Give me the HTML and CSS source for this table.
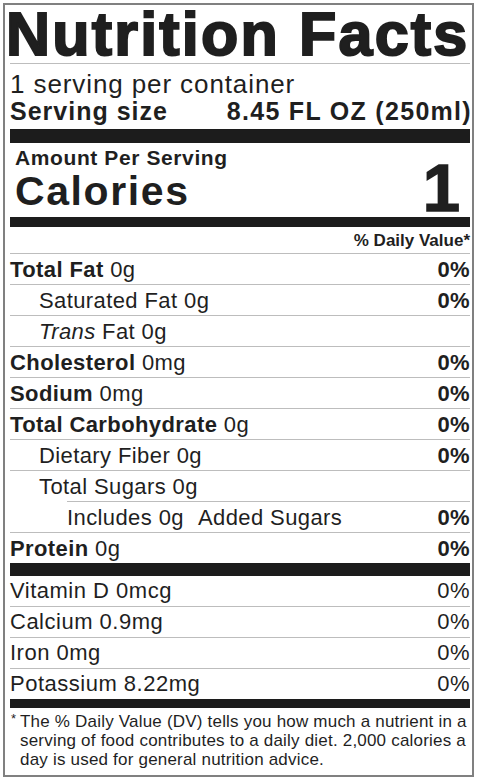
FILE: index.html
```html
<!DOCTYPE html>
<html lang="en">
<head>
  <meta charset="UTF-8">
  <meta name="viewport" content="width=device-width, initial-scale=1.0">
  <title>Nutrition Facts</title>
  <link rel="stylesheet" href="styles.css">
</head>
<body>
  <div class="label">
    <h1 class="title">Nutrition Facts</h1>

    <div class="serving">
      <p class="servings">1 serving per container</p>
      <p class="serving-size"><span>Serving size</span><span class="serving-amount">8.45 FL OZ (250ml)</span></p>
    </div>

    <div class="calories">
      <div class="calories-text">
        <p class="amount">Amount Per Serving</p>
        <p class="calories-label">Calories</p>
      </div>
      <p class="calories-value">1</p>
    </div>

    <p class="dv-head">% Daily Value*</p>

    <ul class="nutrients">
      <li class="row"><span><b>Total Fat</b> 0g</span><b>0%</b></li>
      <li class="row indent"><span>Saturated Fat 0g</span><b>0%</b></li>
      <li class="row indent"><span><i>Trans</i> Fat 0g</span></li>
      <li class="row"><span><b>Cholesterol</b> 0mg</span><b>0%</b></li>
      <li class="row"><span><b>Sodium</b> 0mg</span><b>0%</b></li>
      <li class="row"><span><b>Total Carbohydrate</b> 0g</span><b>0%</b></li>
      <li class="row indent"><span>Dietary Fiber 0g</span><b>0%</b></li>
      <li class="row indent sugars"><span>Total Sugars 0g</span></li>
      <li class="row indent-2"><span>Includes 0g<span class="added">Added Sugars</span></span><b>0%</b></li>
      <li class="row"><span><b>Protein</b> 0g</span><b>0%</b></li>
    </ul>

    <ul class="vitamins">
      <li class="row"><span>Vitamin D 0mcg</span><span>0%</span></li>
      <li class="row"><span>Calcium 0.9mg</span><span>0%</span></li>
      <li class="row"><span>Iron 0mg</span><span>0%</span></li>
      <li class="row"><span>Potassium 8.22mg</span><span>0%</span></li>
    </ul>

    <p class="footnote"><span class="star">*</span>The % Daily Value (DV) tells you how much a nutrient in a<br>serving of food contributes to a daily diet. 2,000 calories a<br>day is used for general nutrition advice.</p>
  </div>
</body>
</html>
```

FILE: styles.css
```css
body {
  margin: 0;
  font-family: "Liberation Sans", Arial, sans-serif;
  color: #1f1f1f;
  background-color: #fff;
}

p, h1, ul {
  margin: 0;
  padding: 0;
}

ul {
  list-style: none;
}

.label {
  margin: 3px;
  border: 2px solid #808080;
  padding: 0 2px 0 5px;
}

.title {
  font-size: 61px;
  font-weight: bold;
  line-height: 57px;
  padding-top: 1px;
  text-indent: -4px;
  letter-spacing: 2.2px;
  white-space: nowrap;
  -webkit-text-stroke: 2px #1f1f1f;
  border-bottom: 1px solid #bdbdbd;
}

.serving {
  padding: 6px 0 5px;
  border-bottom: 14px solid #1c1c1c;
}

.servings {
  font-size: 26px;
  line-height: 28px;
  letter-spacing: 0.9px;
}

.serving-size {
  display: flex;
  justify-content: space-between;
  font-size: 25px;
  font-weight: bold;
  line-height: 26px;
  letter-spacing: 1px;
}

.serving-amount {
  letter-spacing: 1.3px;
  margin-right: -2px;
}

.calories {
  display: flex;
  justify-content: space-between;
  align-items: flex-end;
  padding-left: 5px;
  border-bottom: 10px solid #1c1c1c;
}

.calories-text {
  padding: 4px 0;
}

.amount {
  font-size: 21px;
  font-weight: bold;
  line-height: 22px;
  letter-spacing: 0.6px;
}

.calories-label {
  font-size: 41px;
  font-weight: bold;
  line-height: 44px;
  letter-spacing: 1.6px;
}

.calories-value {
  font-size: 67px;
  font-weight: bold;
  line-height: 58px;
  margin-right: 10px;
  -webkit-text-stroke: 1.5px #1f1f1f;
}

.dv-head {
  text-align: right;
  font-size: 17px;
  font-weight: bold;
  line-height: 25px;
  padding-top: 1px;
  border-bottom: 1px solid #bdbdbd;
}

.row {
  display: flex;
  justify-content: space-between;
  font-size: 22px;
  line-height: 29px;
  padding-top: 1px;
  letter-spacing: 0.4px;
  border-bottom: 1px solid #bdbdbd;
}

.row:last-child {
  border-bottom: 0;
}

.indent {
  padding-left: 29px;
}

.indent-2 {
  padding-left: 57px;
}

/* the line under Total Sugars starts at the Includes indent */
.sugars {
  border-bottom: 0;
  padding-bottom: 1px;
  background: linear-gradient(#bdbdbd, #bdbdbd) 57px 100% / calc(100% - 57px) 1px no-repeat;
}

.added {
  margin-left: 14px;
}

.nutrients {
  border-bottom: 13px solid #1c1c1c;
}

.vitamins {
  border-bottom: 9px solid #1c1c1c;
}

.vitamins .row {
  line-height: 30px;
  padding-top: 0;
  letter-spacing: 0.5px;
}

.footnote {
  font-size: 17px;
  line-height: 19.2px;
  letter-spacing: 0.2px;
  padding: 4px 0 5px 10px;
  text-indent: -9px;
}

.star {
  display: inline-block;
  width: 9px;
  font-size: 13px;
  line-height: 11px;
  vertical-align: 4px;
  text-indent: 0;
  letter-spacing: 0;
}
```
